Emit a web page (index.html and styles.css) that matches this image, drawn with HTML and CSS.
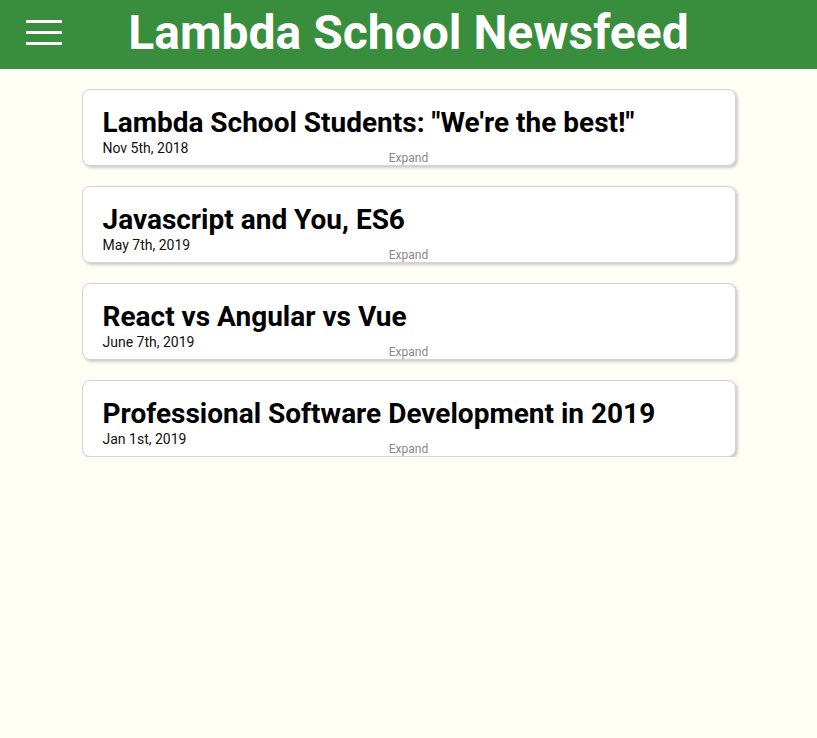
FILE: index.html
```html
<!DOCTYPE html>
<html>
<head>
<meta charset="utf-8">
<link rel="stylesheet" href="styles.css">
</head>
<body>
<header class="header">
  <div class="menu-button">
    <span class="bar"></span><span class="bar"></span><span class="bar"></span>
  </div>
  <h1 class="header-title">Lambda School Newsfeed</h1>
</header>
<main class="articles">
  <div class="article">
    <h2 class="article-title">Lambda School Students: "We're the best!"</h2>
    <p class="date">Nov 5th, 2018</p>
    <span class="expand">Expand</span>
  </div>
  <div class="article">
    <h2 class="article-title">Javascript and You, ES6</h2>
    <p class="date">May 7th, 2019</p>
    <span class="expand">Expand</span>
  </div>
  <div class="article">
    <h2 class="article-title">React vs Angular vs Vue</h2>
    <p class="date">June 7th, 2019</p>
    <span class="expand">Expand</span>
  </div>
  <div class="article">
    <h2 class="article-title">Professional Software Development in 2019</h2>
    <p class="date">Jan 1st, 2019</p>
    <span class="expand">Expand</span>
  </div>
</main>
</body>
</html>
```
FILE: styles.css
```css
* { box-sizing: border-box; }
html, body {
  margin: 0;
  padding: 0;
  background: #fffef4;
  font-family: Roboto, "Liberation Sans", sans-serif;
}
.header {
  position: relative;
  height: 69px;
  background: #388e3c;
  display: flex;
  align-items: center;
  justify-content: center;
}
.menu-button {
  position: absolute;
  left: 26px;
  top: 20px;
  width: 36px;
  display: flex;
  flex-direction: column;
  gap: 8px;
}
.bar {
  display: block;
  height: 3px;
  background: #fff;
}
.header-title {
  margin: 0 0 4px;
  color: #fff;
  font-size: 48px;
  font-weight: 700;
  line-height: 60px;
}
.articles {
  display: flex;
  flex-direction: column;
  align-items: center;
  gap: 20px;
  padding-top: 20px;
}
.article {
  width: 654px;
  height: 77px;
  background: #fff;
  border: 1px solid #d3d3d3;
  border-radius: 8px;
  box-shadow: 2px 2px 3px #ccc;
  padding: 16px 20px 0;
  position: relative;
}
.article-title {
  margin: 0;
  font-size: 28px;
  font-weight: 700;
  line-height: 34px;
  color: #000;
}
.date {
  margin: 0;
  font-size: 14px;
  line-height: 16px;
  color: #111;
}
.expand {
  position: absolute;
  left: 0;
  right: 0;
  bottom: 0;
  text-align: center;
  font-size: 12px;
  line-height: 14px;
  color: #888;
}
```
